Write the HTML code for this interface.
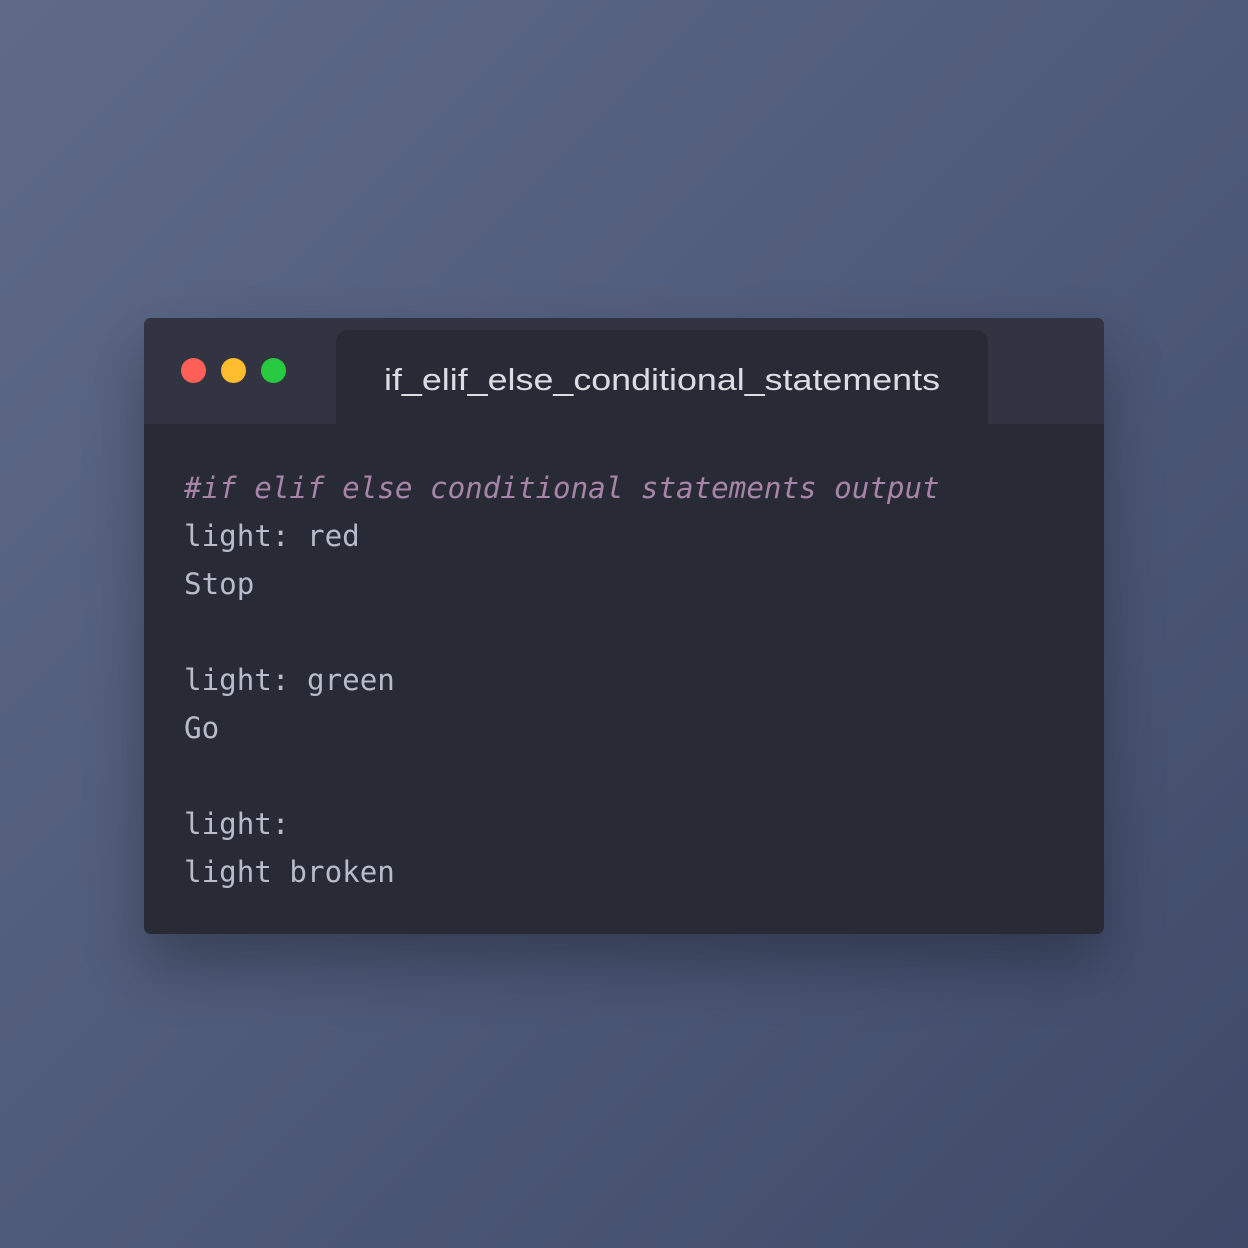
<!DOCTYPE html>
<html><head><meta charset="utf-8"><style>
html,body{margin:0;padding:0;}
body{width:1248px;height:1248px;background:linear-gradient(135deg,#5e6a88 0%,#4f5b7a 50%,#3f4a69 100%);position:relative;overflow:hidden;font-family:"Liberation Sans",sans-serif;}
.win{position:absolute;left:144px;top:318px;width:960px;height:616px;background:#282b35;border-radius:7px;overflow:hidden;box-shadow:0 30px 60px rgba(0,0,0,0.3);}
.head{position:absolute;left:0;top:0;width:960px;height:106px;background:#323541;}
.dot{position:absolute;top:40px;width:25px;height:25px;border-radius:50%;}
.tab{position:absolute;left:192px;top:12px;width:652px;height:94px;background:#282b35;border-radius:12px 12px 0 0;}
.tab svg{position:absolute;left:0;top:0;}
.code{position:absolute;left:40px;top:146px;font-family:"DejaVu Sans Mono","Liberation Mono",monospace;font-size:29.2px;line-height:48px;color:#b6bccb;white-space:pre;}
.c{color:#a784a8;font-style:italic;}
</style></head><body>
<div class="win">
 <div class="head"></div>
 <div class="dot" style="left:37px;background:#fe5f57"></div>
 <div class="dot" style="left:77px;background:#febc2e"></div>
 <div class="dot" style="left:117px;background:#28c840"></div>
 <div class="tab"><svg width="652" height="94"><text x="48" y="60" font-family="Liberation Sans, sans-serif" font-size="31" fill="#dcdde2" textLength="556" lengthAdjust="spacingAndGlyphs">if_elif_else_conditional_statements</text></svg></div>
 <div class="code"><span class="c">#if elif else conditional statements output</span>
light: red
Stop

light: green
Go

light:
light broken</div>
</div>
</body></html>
